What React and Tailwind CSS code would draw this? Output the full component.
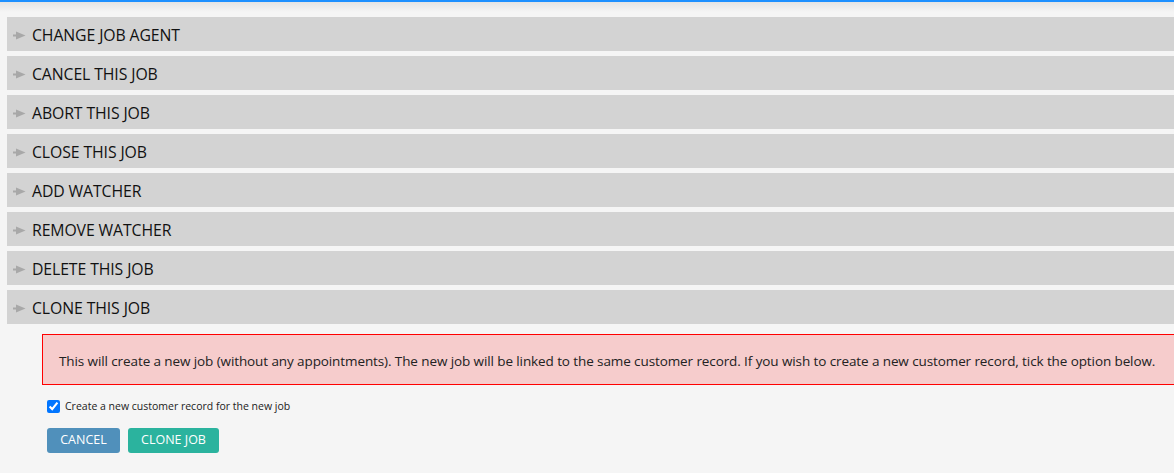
import React from "react";

const items = [
  "CHANGE JOB AGENT",
  "CANCEL THIS JOB",
  "ABORT THIS JOB",
  "CLOSE THIS JOB",
  "ADD WATCHER",
  "REMOVE WATCHER",
  "DELETE THIS JOB",
  "CLONE THIS JOB",
];

function Pointer() {
  return (
    <svg width="13" height="9" viewBox="0 0 13 9" className="shrink-0">
      <rect x="0" y="3.5" width="5" height="2" fill="#a8a8a8" />
      <polygon points="3,0.5 12.5,4.5 3,8.5" fill="#a8a8a8" />
    </svg>
  );
}

export default function App() {
  return (
    <div
      className="w-[1174px] h-[473px] overflow-hidden bg-[#f5f5f5] relative"
      style={{ fontFamily: '"Open Sans", "Noto Sans", sans-serif' }}
    >
      <div className="h-[2px] bg-[#1e90ff]" />
      <div className="h-[10px] bg-gradient-to-b from-[#e4e4e4] to-[#f5f5f5]" />
      <div className="pl-[7px] pt-[5px] flex flex-col gap-[5px]">
        {items.map((t) => (
          <div
            key={t}
            className="h-[34px] w-[1180px] bg-[#d3d3d3] flex items-center pl-[6px] gap-[6px] pt-[3px] text-[15.8px] text-[#111] tracking-[-0.1px]"
          >
            <Pointer />
            <span>{t}</span>
          </div>
        ))}
      </div>
      <div className="pl-[42px] pt-[10px]">
        <div className="h-[51px] w-[1150px] border border-[#ff0000] bg-[#f6cccc] flex items-center pl-[16px] pt-[3px] text-[13.5px] text-[#222] tracking-[-0.1px]">
          This will create a new job (without any appointments). The new job will be linked to the same customer record. If you wish to create a new customer record, tick the option below.
        </div>
      </div>
      <div className="pl-[47px] pt-[14px] flex items-center gap-[5px]">
        <input
          type="checkbox"
          defaultChecked
          className="w-[13px] h-[13px] m-0 accent-[#0075ff]"
        />
        <span className="text-[10.5px] text-[#222]">
          Create a new customer record for the new job
        </span>
      </div>
      <div className="pl-[47px] pt-[13px] flex gap-[8px]">
        <button className="h-[25px] w-[73px] rounded-[3px] bg-[#5090bb] text-white text-[12.5px] pt-[1px]">
          CANCEL
        </button>
        <button className="h-[25px] w-[91px] rounded-[3px] bg-[#2bb39e] text-white text-[12.5px] pt-[1px]">
          CLONE JOB
        </button>
      </div>
    </div>
  );
}
